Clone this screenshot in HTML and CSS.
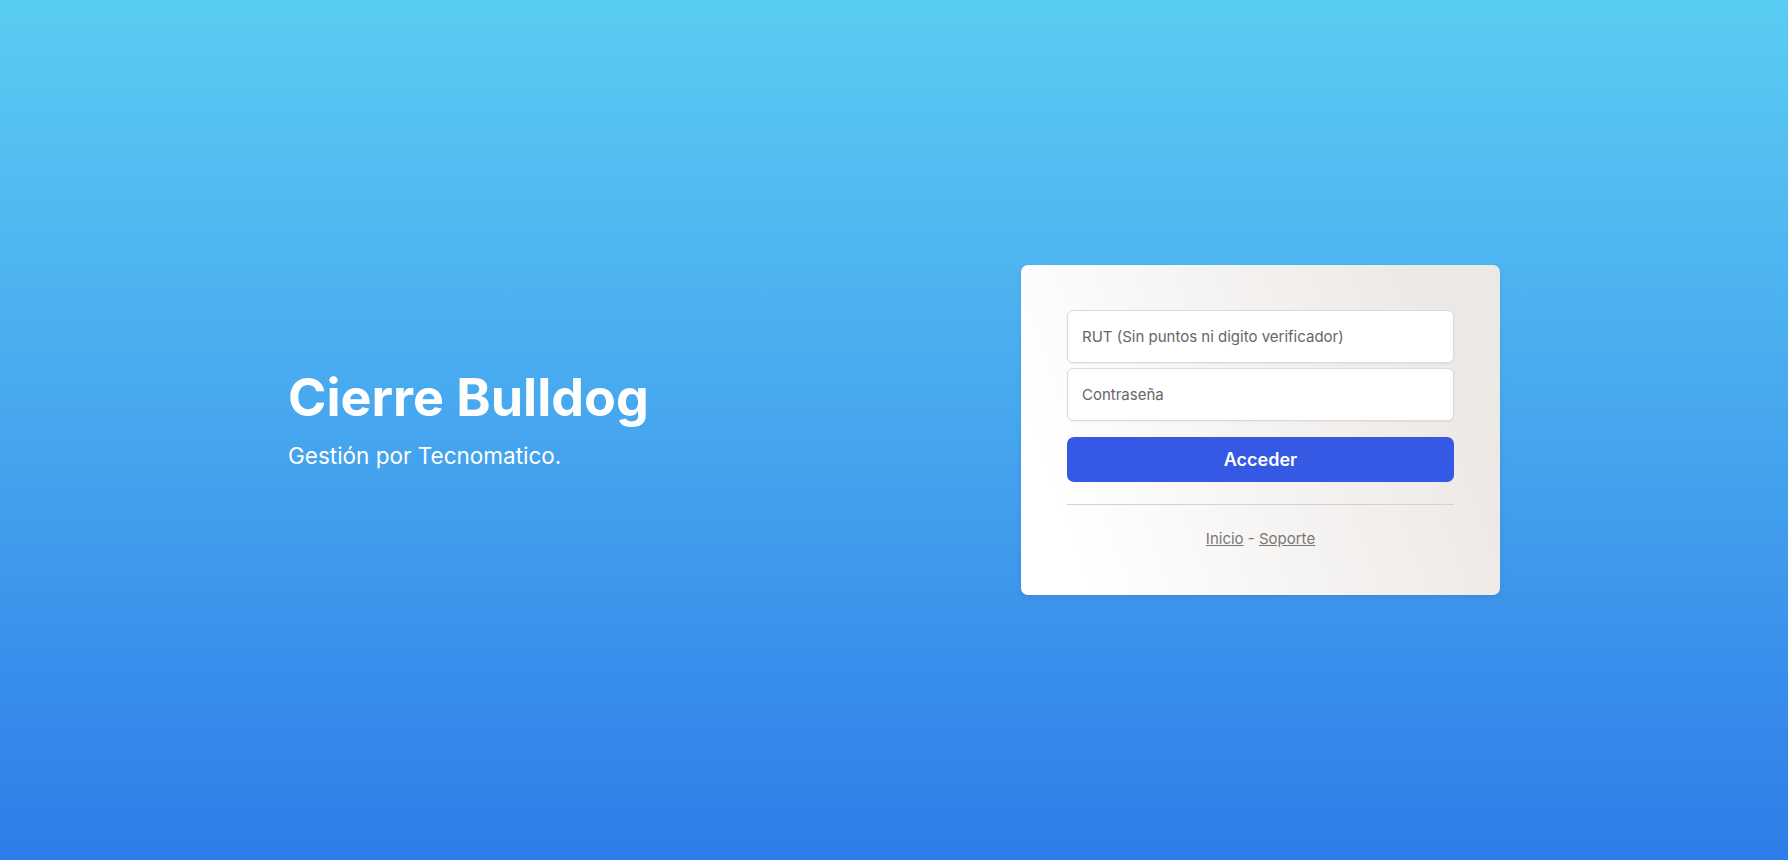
FILE: index.html
```html
<!DOCTYPE html>
<html lang="es">
<head>
<meta charset="utf-8">
<title>Cierre Bulldog</title>
<link rel="stylesheet" href="styles.css">
</head>
<body>
<main class="page">
  <div class="wrap">
    <section class="intro">
      <h1 class="title">Cierre Bulldog</h1>
      <p class="subtitle">Gestión por Tecnomatico.</p>
    </section>
    <form class="card">
      <input class="field" type="text" placeholder="RUT (Sin puntos ni digito verificador)">
      <input class="field" type="password" placeholder="Contraseña">
      <button class="btn" type="button">Acceder</button>
      <hr class="divider">
      <div class="links"><a href="#">Inicio</a> - <a href="#">Soporte</a></div>
    </form>
  </div>
</main>
</body>
</html>
```
FILE: styles.css
```css
* { box-sizing: border-box; }
html, body { margin: 0; height: 100%; }
body {
  font-family: Inter, "Noto Sans", sans-serif;
  background: linear-gradient(to bottom, #5acdf3 0%, #48aaef 45%, #2f7ce8 100%);
  min-height: 860px;
}
.page {
  height: 860px;
  display: flex;
  align-items: center;
  justify-content: center;
}
.wrap {
  width: 1212px;
  display: flex;
  align-items: center;
}
.intro {
  flex: 1;
  color: #fff;
}
.title {
  margin: 0 0 10px;
  font-size: 52px;
  line-height: 62px;
  font-weight: 700;
  letter-spacing: 0;
}
.subtitle {
  margin: 0 0 22px;
  font-size: 22.5px;
  line-height: 33px;
  font-weight: 400;
}
.card {
  width: 479px;
  padding: 45px 46px;
  border-radius: 7px;
  background: linear-gradient(70deg, #ffffff 12%, #ece8e5 88%);
  box-shadow: 0 2px 6px rgba(0, 0, 0, 0.08);
  display: flex;
  flex-direction: column;
}
.field {
  height: 53px;
  width: 100%;
  padding: 0 14px;
  border: 1px solid #dadada;
  border-radius: 6px;
  background: #fff;
  font-family: Inter, "Noto Sans", sans-serif;
  font-size: 15px;
  color: #333;
  box-shadow: 0 1px 2px rgba(0, 0, 0, 0.05);
  outline: none;
}
.field + .field { margin-top: 5px; }
.field::placeholder { color: #666; opacity: 1; }
.btn {
  margin-top: 16px;
  height: 45px;
  width: 100%;
  border: 0;
  border-radius: 7px;
  background: #3559e5;
  color: #fff;
  font-family: Inter, "Noto Sans", sans-serif;
  font-size: 18px;
  font-weight: 600;
  cursor: pointer;
}
.divider {
  margin: 22px 0 0;
  border: 0;
  border-top: 1px solid #d4d2d0;
  height: 0;
}
.links {
  margin-top: 23px;
  text-align: center;
  font-size: 15px;
  line-height: 22px;
  color: #777;
}
.links a { color: #777; text-decoration: underline; }
```
